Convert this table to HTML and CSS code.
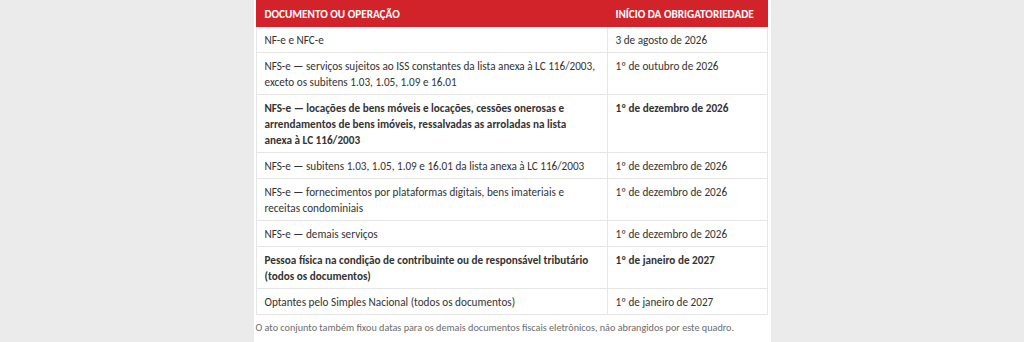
FILE: index.html
```html
<!DOCTYPE html>
<html lang="pt-BR">
<head>
<meta charset="utf-8">
<title>Cronograma</title>
<link rel="stylesheet" href="styles.css">
</head>
<body>
<main class="card">
  <table class="schedule">
    <thead>
      <tr><th class="col-doc">DOCUMENTO OU OPERAÇÃO</th><th class="col-date">INÍCIO DA OBRIGATORIEDADE</th></tr>
    </thead>
    <tbody>
      <tr><td>NF-e e NFC-e</td><td>3 de agosto de 2026</td></tr>
      <tr><td>NFS-e — serviços sujeitos ao ISS constantes da lista anexa à LC 116/2003, exceto os subitens 1.03, 1.05, 1.09 e 16.01</td><td>1º de outubro de 2026</td></tr>
      <tr class="strong"><td>NFS-e — locações de bens móveis e locações, cessões onerosas e arrendamentos de bens imóveis, ressalvadas as arroladas na lista<br>anexa à LC 116/2003</td><td>1º de dezembro de 2026</td></tr>
      <tr><td>NFS-e — subitens 1.03, 1.05, 1.09 e 16.01 da lista anexa à LC 116/2003</td><td>1º de dezembro de 2026</td></tr>
      <tr><td>NFS-e — fornecimentos por plataformas digitais, bens imateriais e receitas condominiais</td><td>1º de dezembro de 2026</td></tr>
      <tr><td>NFS-e — demais serviços</td><td>1º de dezembro de 2026</td></tr>
      <tr class="strong"><td>Pessoa física na condição de contribuinte ou de responsável tributário (todos os documentos)</td><td>1º de janeiro de 2027</td></tr>
      <tr><td>Optantes pelo Simples Nacional (todos os documentos)</td><td>1º de janeiro de 2027</td></tr>
    </tbody>
  </table>
  <p class="note">O ato conjunto também fixou datas para os demais documentos fiscais eletrônicos, não abrangidos por este quadro.</p>
</main>
</body>
</html>
```

FILE: styles.css
```css
html, body {
  margin: 0;
  padding: 0;
  background: #ebebeb;
  height: 100%;
}
body {
  font-family: Carlito, Lato, "Liberation Sans", sans-serif;
  color: #333;
}
.card {
  width: 512px;
  margin: 0 auto;
  padding: 0 3px 0 2px;
  background: #fff;
  min-height: 100%;
  box-sizing: content-box;
}
.schedule {
  width: 512px;
  border-collapse: collapse;
  font-size: 11.2px;
  line-height: 16px;
}
.schedule th {
  background: #d2232a;
  color: #fff;
  font-weight: bold;
  text-align: left;
  padding: 5px 8px 4px 8px;
  border: 1px solid #d2232a;
  white-space: nowrap;
}
.schedule th.col-date { border-left: 1px solid #e07a7e; }
.col-doc { width: 334px; }
.schedule td {
  padding: 5px 8px 4px 8px;
  border: 1px solid #e6e6e6;
  vertical-align: top;
}
.strong td { font-weight: bold; }
.note {
  margin: 6px 0 0 0;
  font-size: 10.2px;
  line-height: 14px;
  color: #6b6b6b;
}
```
